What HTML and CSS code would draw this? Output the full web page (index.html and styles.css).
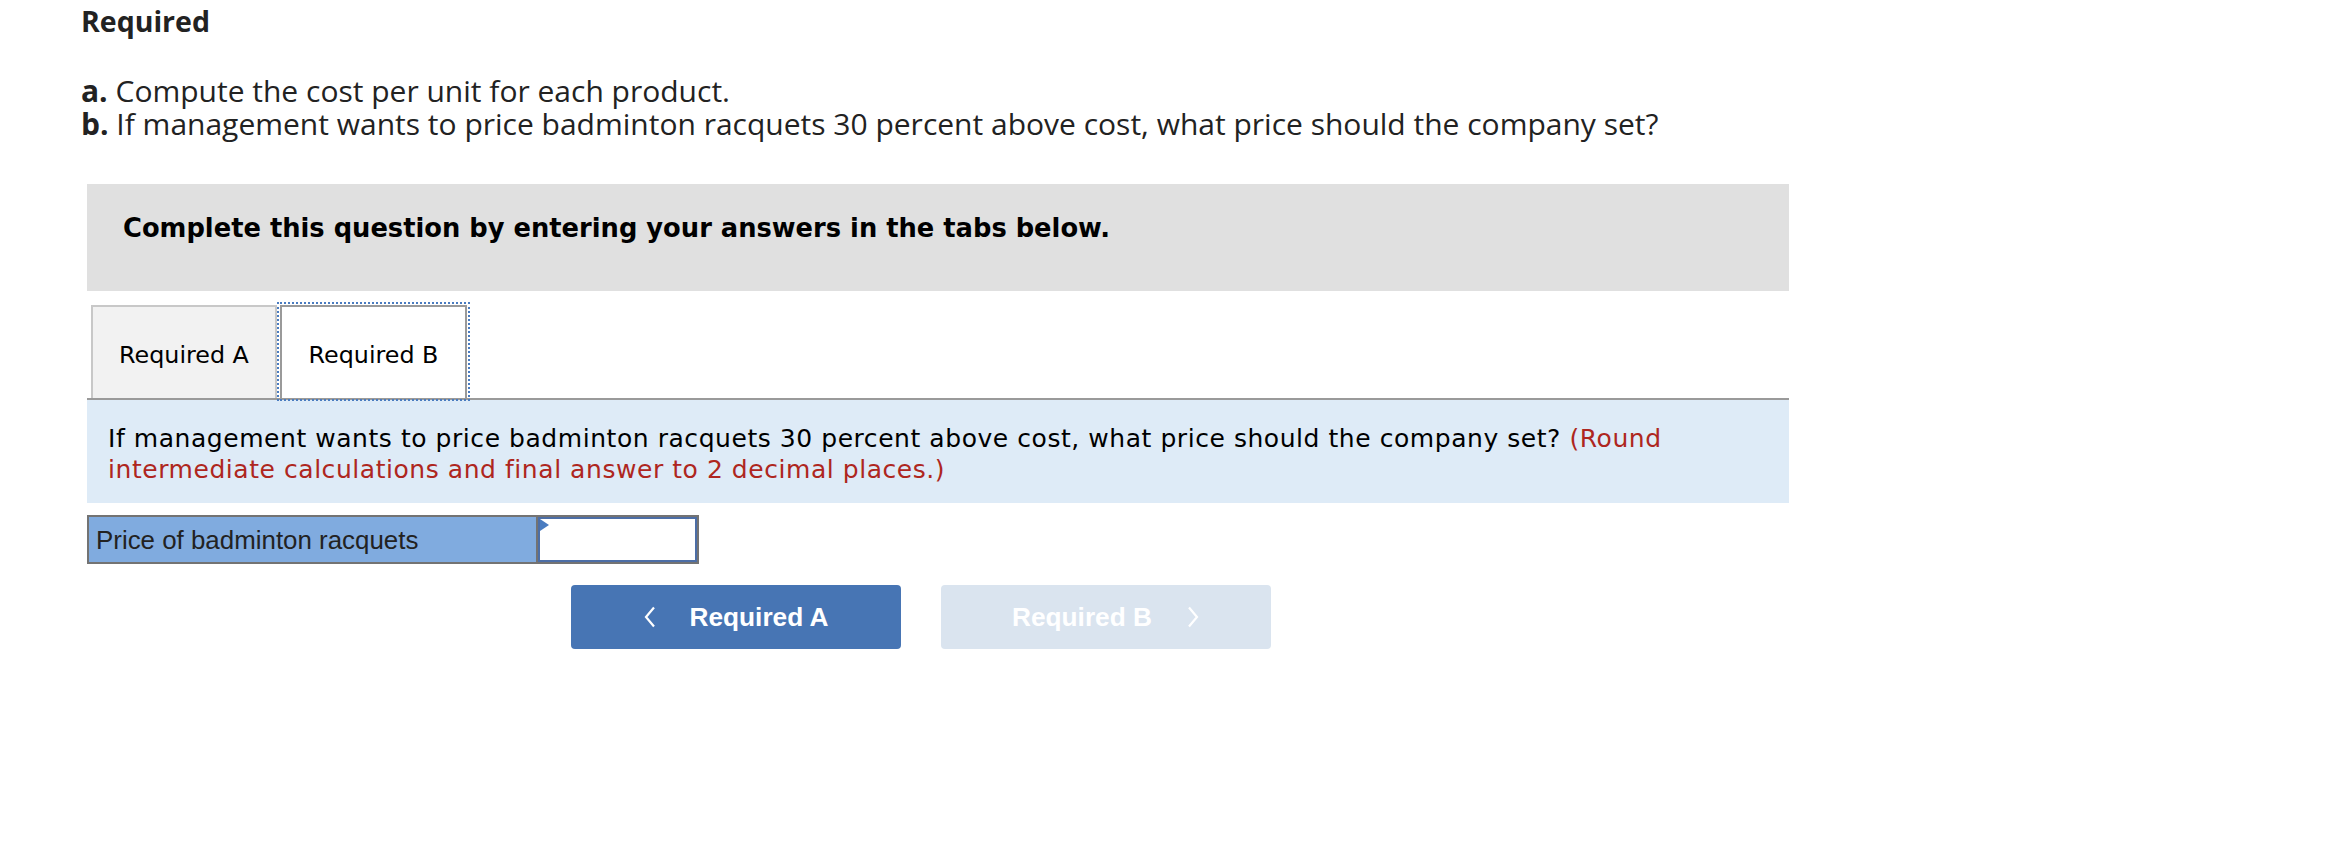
FILE: index.html
```html
<!DOCTYPE html>
<html>
<head>
<meta charset="utf-8">
<link rel="stylesheet" href="styles.css">
</head>
<body>
<div class="page">
  <h2 class="title">Required</h2>
  <div class="parts">
    <p><b>a.</b> Compute the cost per unit for each product.</p>
    <p><b>b.</b> If management wants to price badminton racquets 30 percent above cost, what price should the company set?</p>
  </div>
  <div class="question">
    <div class="banner">
      <h3>Complete this question by entering your answers in the tabs below.</h3>
    </div>
    <div class="tabs">
      <div class="tab">Required A</div>
      <div class="tab active">Required B</div>
    </div>
    <div class="prompt">If management wants to price badminton racquets 30 percent above cost, what price should the company set? <span class="note">(Round intermediate calculations and final answer to 2 decimal places.)</span></div>
    <div class="answer">
      <div class="label">Price of badminton racquets</div>
      <div class="field"></div>
    </div>
    <div class="nav">
      <div class="btn prev">
        <svg class="chev" width="14" height="22" viewBox="0 0 14 22"><polyline points="11,1.5 3,11 11,20.5" fill="none" stroke="#fff" stroke-width="2.2"/></svg>
        <span>Required A</span>
      </div>
      <div class="btn next">
        <span>Required B</span>
        <svg class="chev" width="14" height="22" viewBox="0 0 14 22"><polyline points="3,1.5 11,11 3,20.5" fill="none" stroke="#fff" stroke-width="2.2"/></svg>
      </div>
    </div>
  </div>
</div>
</body>
</html>
```
FILE: styles.css
```css
html, body { margin: 0; padding: 0; background: #fff; }
.page { padding: 4px 0 0 81px; width: 1720px; }
.title {
  margin: 0; font-family: "Open Sans", sans-serif; font-weight: 700; font-size: 28.5px; line-height: 34px; color: #222;
}
.parts { margin-top: 36px; font-family: "Open Sans", sans-serif; font-size: 30px; line-height: 33px; color: #222; }
.parts p { margin: 0; }
.parts b { font-weight: 700; }
.question { margin-left: 6px; width: 1702px; }
.banner { background: #e0e0e0; height: 107px; margin-top: 44px; box-sizing: border-box; padding: 29px 0 0 36px; }
.banner h3 { margin: 0; font-family: "DejaVu Sans", Verdana, sans-serif; font-weight: 700; font-size: 25.75px; line-height: 30px; color: #000; }
.tabs { display: flex; gap: 3px; margin-top: 14px; padding-left: 4px; border-bottom: 2px solid #9a9a9a; height: 93px; }
.tab {
  width: 186px; box-sizing: border-box; display: flex; align-items: center; justify-content: center;
  background: #f2f2f2; border: 2px solid #c8c8c8; border-bottom: 0; padding-top: 4px;
  font-family: "DejaVu Sans", Verdana, sans-serif; font-size: 23.8px; color: #000;
}
.tab.active { background: #fff; border-color: #9a9a9a; width: 187px; outline: 2px dotted #4a7cc0; outline-offset: 1px; }
.prompt {
  background: #deebf7; padding: 23px 21px 18px 21px;
  font-family: "DejaVu Sans", Verdana, sans-serif; font-size: 25px; letter-spacing: 0.55px; line-height: 31px; color: #000;
}
.note { color: #ae2620; }
.answer { display: flex; margin-top: 12px; width: 612px; height: 49px; box-sizing: border-box; border: 2px solid #737373; }
.label {
  width: 449px; box-sizing: border-box; background: #80abdf; border-right: 2px solid #737373; padding: 2px 0 0 7px;
  font-family: "Liberation Sans", Arial, sans-serif; font-size: 25.9px; line-height: 43px; color: #222;
}
.field { flex: 1; position: relative; background: #fff; border: 2px solid #4c6ea6; }
.field::before {
  content: ""; position: absolute; left: 0; top: 0;
  border-left: 9px solid #4a7cc0; border-top: 6px solid transparent; border-bottom: 6px solid transparent;
}
.nav { display: flex; gap: 40px; margin-top: 21px; padding-left: 484px; }
.btn {
  width: 330px; height: 64px; border-radius: 4px; display: flex; align-items: center; justify-content: center;
  font-family: "Liberation Sans", Arial, sans-serif; font-weight: 700; font-size: 26.25px; color: #fff;
}
.btn.prev { background: #4775b4; gap: 32px; }
.btn.next { background: #dae4ef; gap: 34px; }
.chev { display: block; }
```
